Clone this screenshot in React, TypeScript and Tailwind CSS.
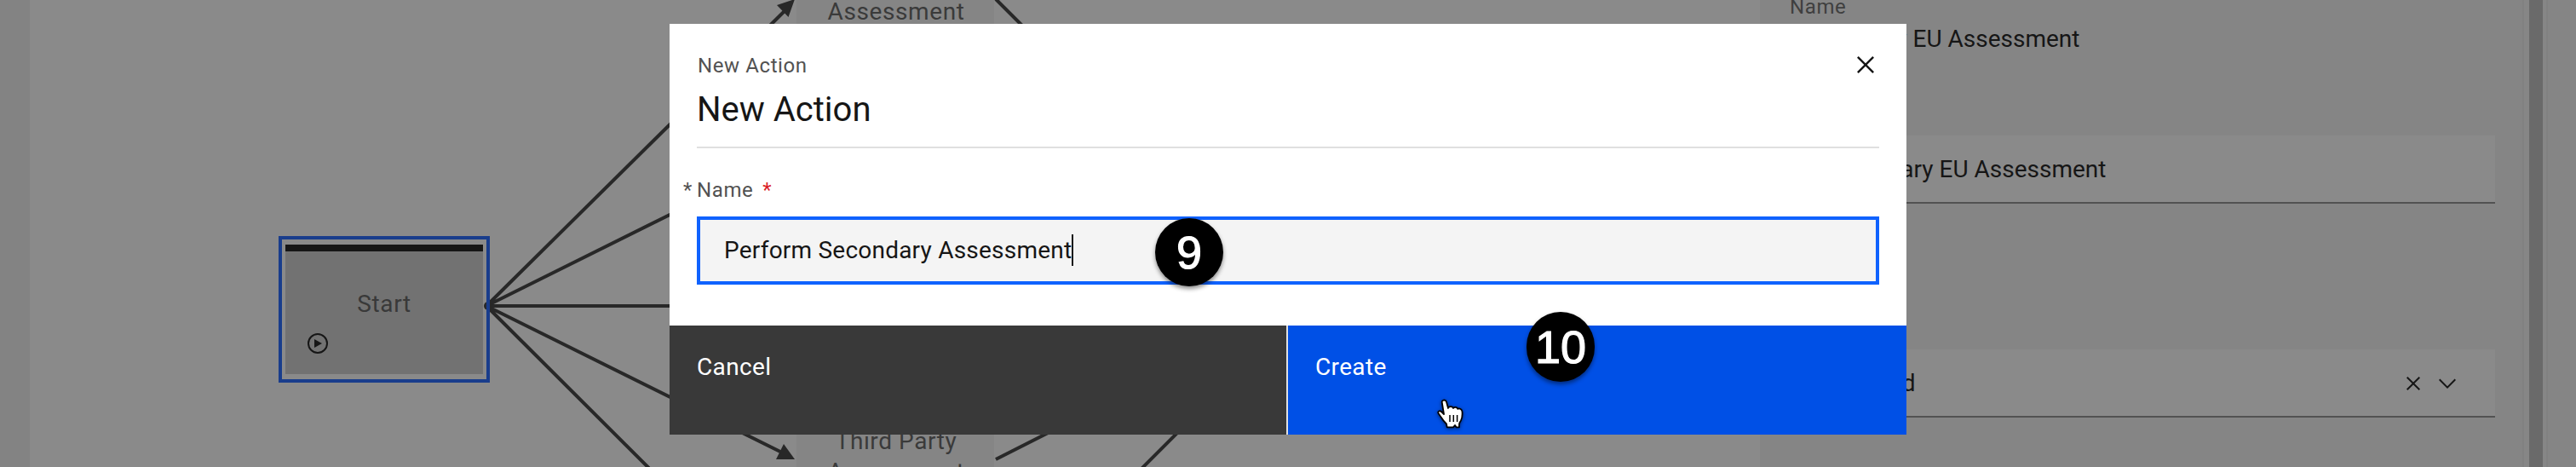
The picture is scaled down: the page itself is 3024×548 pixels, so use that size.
import React from "react";

function Close({ className }: { className: string }) {
  return (
    <svg viewBox="0 0 32 32" className={className} fill="currentColor">
      <path d="M24 9.4 22.6 8 16 14.6 9.4 8 8 9.4 14.6 16 8 22.6 9.4 24 16 17.4 22.6 24 24 22.6 17.4 16 24 9.4z" />
    </svg>
  );
}

function Step({ n, className }: { n: string; className: string }) {
  return (
    <div className={`absolute flex items-center justify-center rounded-full bg-black font-['Liberation_Sans',sans-serif] text-[54px] leading-none text-white shadow-[0_3px_5px_rgba(0,0,0,0.45)] [-webkit-text-stroke:1.2px_white] ${className}`}>
      {n}
    </div>
  );
}

export default function App() {
  return (
    <div className="relative flex h-[548px] w-[3024px] overflow-hidden bg-[#858585] font-[Roboto,sans-serif] text-[28px] leading-9 text-[#161616]">
      <div className="w-[35px] shrink-0 bg-[#838383]" />

      <main className="relative w-[2031px] shrink-0 overflow-hidden bg-[#8a8a8a]">
        <div className="absolute left-[900px] top-0 flex h-7 w-[232px] justify-center bg-[#858585] pl-0.5 text-[#3a3a3a]">
          <span className="-mt-1 tracking-[0.6px]">Assessment</span>
        </div>
        <div className="absolute left-[900px] top-[490px] flex h-[58px] w-[232px] flex-col items-center bg-[#858585] pl-0.5 text-[#3a3a3a]">
          <span className="mt-[10px] tracking-[0.6px]">Third Party</span>
          <span className="tracking-[0.6px]">Assessment</span>
        </div>
        <svg viewBox="35 0 2031 548" className="absolute inset-0 h-full w-full" fill="none">
          <g className="stroke-[#282828]" strokeWidth="4">
            <path d="M572 358 925 9M571 359 925 183M571 359H930M571 359 922 533M572 360 930 717" />
            <path d="M1169-1 1210 40M1169 539 1250 498M1330 560 1400 490" />
          </g>
          <circle cx="573" cy="359" r="5" fill="#282828" />
          <path d="M933-1 912 6 925.500 20zM933 539h-22l9-18z" fill="#282828" />
        </svg>
        <div className="absolute left-[292px] top-[277px] h-[172px] w-[248px] border-4 border-[#193d8c] px-1 py-1.5">
          <div className="relative flex h-full flex-col items-center border-t-8 border-[#161616] bg-[#727272] text-[#393939]">
            <span className="mt-11 tracking-[0.6px]">Start</span>
            <svg viewBox="0 0 24 24" className="absolute bottom-6 left-[26px] size-6 text-[#161616]">
              <circle cx="12" cy="12" r="11" fill="none" stroke="currentColor" strokeWidth="2" />
              <path d="M8 7v10l9-5z" fill="currentColor" />
            </svg>
          </div>
        </div>
      </main>

      <aside className="flex w-[895px] shrink-0 flex-col bg-[#858585] pl-[34px] pr-8">
        <span className="-mt-2.5 h-[35px] pl-px text-[24px] leading-9 tracking-[0.6px] text-[#3f3f3f]">Name</span>
        <span className="mt-[3px] pl-[7px]">Secondary EU Assessment</span>
        <div className="mt-[95px] flex h-20 items-center border-b-2 border-[#525252] bg-[#8a8a8a] pl-[38px] pt-0.5">
          <span>Secondary EU Assessment</span>
        </div>
        <div className="mt-[171px] flex h-20 items-center border-b-2 border-[#525252] bg-[#8a8a8a] pl-[35px] pr-10 pt-0.5">
          <span className="tracking-[0.5px]">Required</span>
          <Close className="ml-auto size-8" />
          <svg viewBox="0 0 32 32" className="ml-2 size-8" fill="currentColor">
            <path d="M16 22 6 12l1.400-1.400 8.600 8.600 8.600-8.600L26 12z" />
          </svg>
        </div>
      </aside>
      <div className="w-2 shrink-0 border-l-2 border-[#818181] bg-[#868686]" />
      <div className="w-4 shrink-0 bg-[#6a6a6a]" />
      <div className="w-1.5 shrink-0 border-r-2 border-[#818181] bg-[#868686]" />

      <section className="absolute left-[786px] top-7 flex h-[482px] w-[1452px] flex-col bg-white">
        <header className="mx-8 flex h-[146px] justify-between border-b-2 border-[#e0e0e0] pt-[31px]">
          <div className="flex flex-col">
            <span className="pl-px text-[24px] leading-9 tracking-[0.6px] text-[#525252]">New Action</span>
            <h1 className="mt-1.5 text-[40px] leading-[56px]">New Action</h1>
          </div>
          <Close className="-mr-1 -mt-[3px] size-10" />
        </header>
        <div className="flex flex-1 flex-col px-8">
          <label className="-ml-4 mt-[31px] flex text-[24px] leading-9 tracking-[0.6px] text-[#525252]">
            <span className="w-4">*</span>Name<span className="ml-[11px] text-[#da1e28]">*</span>
          </label>
          <div className="mt-[13px] flex h-20 items-center border-4 border-[#0f62fe] bg-[#f4f4f4] pl-7">
            <span className="tracking-[0.22px]">Perform Secondary Assessment</span>
            <span className="-mt-0.5 h-[37px] w-0.5 bg-[#161616]" />
          </div>
        </div>
        <footer className="flex h-32 shrink-0 tracking-[0.35px] text-white">
          <div className="flex-1 border-r-2 border-[#e0e0e0] bg-[#393939] pl-8 pt-[31px]">Cancel</div>
          <div className="w-[726px] bg-[#0050e6] pl-8 pt-[31px]">Create</div>
        </footer>
      </section>

      <Step n="9" className="left-[1356px] top-[256px] h-20 w-20" />
      <Step n="10" className="left-[1792px] top-[366px] h-[82px] w-20" />
      <svg viewBox="0 0 34 38" className="absolute left-[1685px] top-[466px] h-[38px] w-[34px] drop-shadow-[0_1px_2px_rgba(0,0,0,0.5)]">
        <path d="M7.800 6.500C7 3 12 2.500 13 5.500L15 13c1-2.500 5-2.300 6 0 1.500-1.800 4.500-1.300 5.200.8 2.300-1 5 .3 5.300 3.200.3 4 0 8-1.500 10.500-1.500 2-2 3-2 4.500v3.300h-3.500L23 33l-2 2.300h-7.300l-.7-3.800c-2-2-4-4-6-7.500L3.500 19c-1-2.500 1.500-3.500 3.500-2l3 3z" fill="white" stroke="black" strokeWidth="1.8" strokeLinejoin="round" />
        <path d="M17 21v8M21.300 21v8M25.600 21v8" stroke="black" strokeWidth="1.500" />
      </svg>
    </div>
  );
}
